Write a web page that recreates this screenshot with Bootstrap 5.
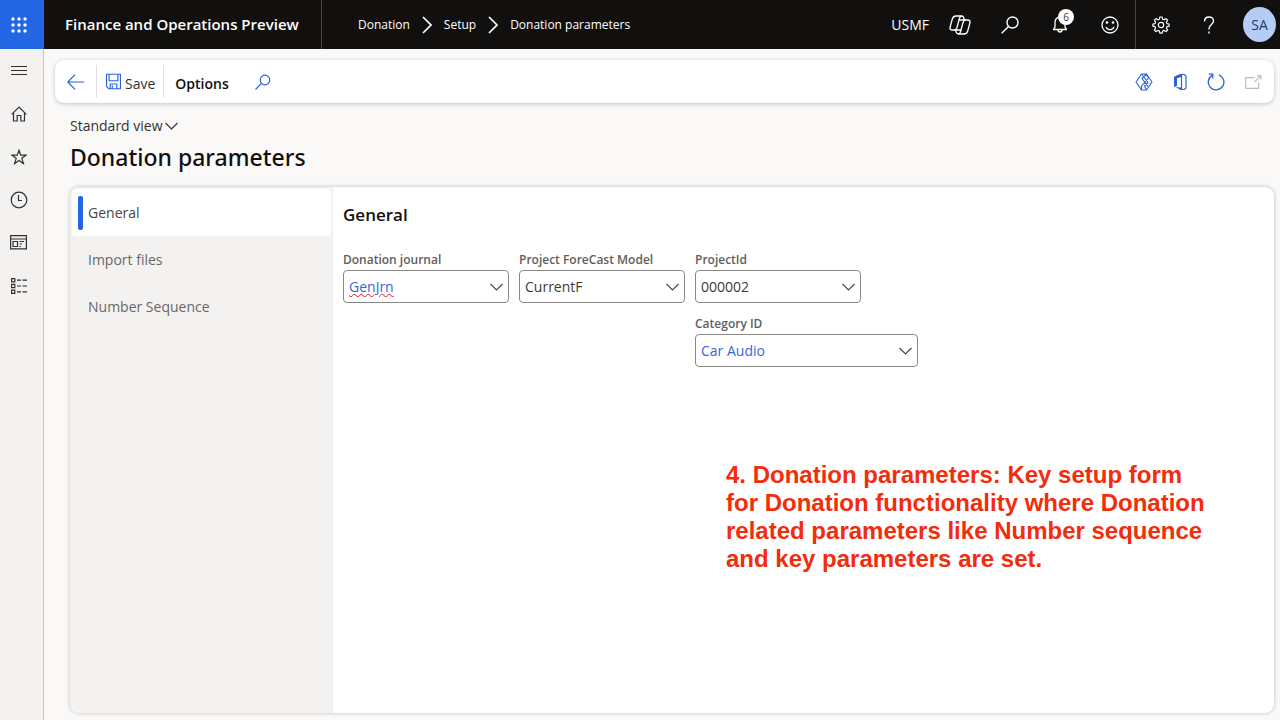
<!DOCTYPE html>
<html lang="en">
<head>
<meta charset="utf-8">
<meta name="viewport" content="width=device-width, initial-scale=1">
<title>Donation parameters</title>
<link href="https://cdn.jsdelivr.net/npm/bootstrap@5.3.0/dist/css/bootstrap.min.css" rel="stylesheet">
<style>
  body { font-family: "Open Sans", "Noto Sans", sans-serif; font-size: 14px; line-height: 20px; background: #faf9f8; color: #323130; }
  svg { display: block; flex: none; fill: none; stroke: currentColor; }
  a { color: inherit; text-decoration: none; }
  button { color: inherit; background: none; border: 0; padding: 0; }
  .topbar { background: #11100f; color: #fff; height: 49px; }
  .waffle { width: 44px; padding-right: 6px; background: #2266e3; }
  .dots { fill: currentColor; stroke: none; }
  .brand { width: 278px; padding: 0 0 2px 21px; font-size: 15px; font-weight: 600; border-right: 1px solid #4a4948; }
  .crumbs { padding-left: 36px; gap: 12px; font-size: 12px; }
  .company { margin-right: 20px; }
  .copilot { margin-right: 14px; }
  .top-icon { width: 50px; }
  .split { border-left: 1px solid #4a4948; }
  .count { top: 9px; right: 11px; width: 16px; height: 16px; border-radius: 50%; background: #fff; color: #323130; font-size: 10px; line-height: 16px; }
  .avatar { width: 33px; height: 35px; border-radius: 50%; background: #b5cdf6; color: #243a5e; margin: 0 4px 0 10px; }
  .rail { width: 44px; background: #f3f2f1; border-right: 1px solid #c8c6c4; }
  .rail-btn { height: 43px; padding-right: 6px; }
  .toolbar-card { min-height: 43px; margin: 11px 6px 0 11px; border-radius: 9px; background: #fff; box-shadow: 0 1px 4px rgba(0,0,0,.22); }
  .accent { color: #2b62d9; }
  .tool-sep { border-left: 1px solid #e1dfdd; height: 33px; }
  .save { margin: 0 8px 0 9px; gap: 4px; }
  .options { margin-left: 11px; }
  .find { margin-left: 26px; }
  .strong { font-weight: 600; color: #11100f; }
  .head { padding: 13px 26px 0; }
  .view { gap: 2px; }
  .page-title { font-family: "Noto Sans", sans-serif; font-size: 23px; line-height: 34px; font-weight: 500; color: #11100f; margin-top: 4px; }
  .panel { margin: 13px 6px 7px 26px; border-radius: 9px; background: #fff; box-shadow: 0 0 4px rgba(0,0,0,.24); overflow: hidden; }
  .tabs-side { width: 263px; background: #f3f2f1; padding: 2px; }
  .side-tab { height: 47px; padding-left: 6px; gap: 5px; border-radius: 4px; text-align: left; color: #696765; }
  .side-tab::before { content: ""; width: 5px; height: 34px; border-radius: 2px; }
  .side-tab.active { background: #fff; color: #484644; }
  .side-tab.active::before { background: #2266e3; }
  .detail { padding: 17px 10px; }
  .section-title { font-size: 17px; line-height: 22px; font-weight: 600; color: #11100f; margin-bottom: 25px; }
  .fields { gap: 10px; }
  .field-col { gap: 12px; }
  .field { width: 166px; }
  .field-wide { width: 223px; }
  .field-label { display: block; font-size: 12px; line-height: 18px; font-weight: 600; color: #605e5c; margin-bottom: 1px; }
  .combo { height: 33px; border: 1px solid #8a8886; border-radius: 4px; font-size: 14px; line-height: 20px; padding: 6px 30px 5px 5px; color: #3b3a39; background-color: #fff;
    background-image: url("data:image/svg+xml,%3Csvg xmlns='http://www.w3.org/2000/svg' viewBox='0 0 13 8'%3E%3Cpath d='M.5 1l6 6 6-6' fill='none' stroke='%23484644' stroke-width='1.1'/%3E%3C/svg%3E");
    background-size: 13px 8px; background-position: right 5px center; }
  .combo.linked { color: #3866d6; }
  .combo.misspelt { text-decoration: underline wavy #e81123 1px; }
  .note { font: bold 24px/28px "Liberation Sans", sans-serif; color: #f32c0c; width: 490px; margin: 94px 48px 0 auto; }
</style>
</head>
<body class="d-flex flex-column min-vh-100">
<header class="topbar d-flex align-items-stretch">
  <button class="waffle d-flex align-items-center justify-content-center" aria-label="App launcher">
    <svg class="dots" width="16" height="16" viewBox="0 0 16 16"><circle cx="2" cy="2" r="1.7"/><circle cx="8" cy="2" r="1.7"/><circle cx="14" cy="2" r="1.7"/><circle cx="2" cy="8" r="1.7"/><circle cx="8" cy="8" r="1.7"/><circle cx="14" cy="8" r="1.7"/><circle cx="2" cy="14" r="1.7"/><circle cx="8" cy="14" r="1.7"/><circle cx="14" cy="14" r="1.7"/></svg>
  </button>
  <a href="#" class="brand d-flex align-items-center text-nowrap">Finance and Operations Preview</a>
  <nav class="crumbs d-flex align-items-center text-nowrap" aria-label="Breadcrumb">
    <a href="#">Donation</a>
    <svg width="10" height="18" viewBox="0 0 10 18" stroke-width="1.7"><path d="M1 1l8 8-8 8"/></svg>
    <a href="#">Setup</a>
    <svg width="10" height="18" viewBox="0 0 10 18" stroke-width="1.7"><path d="M1 1l8 8-8 8"/></svg>
    <a href="#">Donation parameters</a>
  </nav>
  <div class="d-flex align-items-stretch ms-auto">
    <button class="company">USMF</button>
    <button class="copilot d-flex align-items-center justify-content-center" aria-label="Copilot">
      <svg width="22" height="20" viewBox="0 0 22 20" stroke-width="1.300" stroke-linejoin="round"><path d="M7 1H12.500Q11 1.300 10.400 3.500L8 12.500Q7.200 15 5.500 15H3.500Q.3 15 1.100 12L3.300 4Q4.200 1 7 1Z"/><path d="M15 19H9.500Q11 18.700 11.600 16.500L14 7.500Q14.800 5 16.500 5H18.500Q21.700 5 20.900 8L18.700 16Q17.800 19 15 19Z"/><path d="M12.500 1Q14.300 1 14.900 3L15.500 5.200M9.500 19Q7.700 19 7.100 17L6.500 14.800M9.800 5H16.500M5.500 15H12.200"/></svg>
    </button>
    <button class="top-icon d-flex align-items-center justify-content-center" aria-label="Search">
      <svg width="18" height="18" viewBox="0 0 18 18" stroke-width="1.4"><circle cx="11.500" cy="6.500" r="5.500"/><path d="M7.500 10.500L.7 17.300"/></svg>
    </button>
    <button class="top-icon position-relative d-flex align-items-center justify-content-center" aria-label="Notifications">
      <svg width="14" height="17" viewBox="0 0 14 17" stroke-width="1.3"><path d="M.5 13.500H13.500L12 11V6A5 5 0 0 0 2 6V11Z"/><path d="M5 14a2 2 0 0 0 4 0"/></svg>
      <span class="count position-absolute text-center">6</span>
    </button>
    <button class="top-icon d-flex align-items-center justify-content-center" aria-label="Feedback">
      <svg width="18" height="18" viewBox="0 0 18 18" stroke-width="1.3"><circle cx="9" cy="9" r="8"/><path d="M5 11a4.300 4.300 0 0 0 8 0"/><circle cx="6" cy="6.500" r=".7" fill="#fff"/><circle cx="12" cy="6.500" r=".7" fill="#fff"/></svg>
    </button>
    <button class="top-icon split d-flex align-items-center justify-content-center" aria-label="Settings">
      <svg width="18" height="18" viewBox="0 0 18 18" stroke-width="1.200" stroke-linejoin="round"><path d="M7.800 1h2.400l.4 2.200 1.500.6 1.900-1.200 1.600 1.600-1.200 1.900.6 1.500 2.100.4v2.200l-2.100.4-.6 1.500 1.200 1.900-1.600 1.600-1.900-1.200-1.500.6-.4 2.100H7.800l-.4-2.100-1.500-.6L4 15.600 2.400 14l1.200-1.900L3 10.600.9 10.200V8L3 7.600l.6-1.500L2.400 4.200 4 2.600l1.900 1.200 1.500-.6z"/><circle cx="9" cy="9" r="2.700"/></svg>
    </button>
    <button class="d-flex align-items-center justify-content-center px-3" aria-label="Help">
      <svg width="16" height="18" viewBox="0 0 16 18" stroke-width="1.400"><path d="M3.500 5.500C3.500 2.700 5.300 1 8 1s4.500 1.600 4.500 4c0 3.500-4.500 4-4.500 7.500v1"/><path d="M8 15.500v2"/></svg>
    </button>
    <button class="avatar align-self-center" aria-label="Account">SA</button>
  </div>
</header>

<div class="d-flex flex-grow-1">
  <nav class="rail flex-shrink-0 d-flex flex-column" aria-label="Main">
    <button class="rail-btn d-flex align-items-center justify-content-center" aria-label="Expand navigation"><svg width="16" height="9" viewBox="0 0 16 9"><path d="M0 .5h16M0 4.500h16M0 8.500h16"/></svg></button>
    <button class="rail-btn d-flex align-items-center justify-content-center" aria-label="Home"><svg width="16" height="16" viewBox="0 0 16 16" stroke-width="1.200"><path d="M.7 8.300L8 1l7.300 7.300M2.500 6.800V15h3.700V9.500h3.600V15h3.700V6.800"/></svg></button>
    <button class="rail-btn d-flex align-items-center justify-content-center" aria-label="Favorites"><svg width="16" height="16" viewBox="0 0 16 16" stroke-width="1.200"><path d="M8 1.200L9.700 6.200H15L10.800 9.300 12.400 14.600 8 11.400 3.600 14.600 5.200 9.300 1 6.200H6.300Z"/></svg></button>
    <button class="rail-btn d-flex align-items-center justify-content-center" aria-label="Recent"><svg width="18" height="18" viewBox="0 0 18 18" stroke-width="1.200"><circle cx="9" cy="9" r="7.800"/><path d="M8.500 4v5.500H12"/></svg></button>
    <button class="rail-btn d-flex align-items-center justify-content-center" aria-label="Workspaces"><svg width="17" height="15" viewBox="0 0 17 15" stroke-width="1.200"><path d="M.6.6h15.800v13.300H.6zM.6 4h15.800M3 6.500h4.500v5H3zM9.500 6.500H14M9.500 9H12M9.500 11.500H11"/></svg></button>
    <button class="rail-btn d-flex align-items-center justify-content-center" aria-label="Modules"><svg width="16" height="16" viewBox="0 0 16 16" stroke-width="1.200"><path d="M.6.6h3.200v3.200H.6zM.6 6.400h3.200v3.200H.6zM.6 12.200h3.200v3.200H.6zM6 2.200h4M11.500 2.200H16M6 8h4M11.500 8H16M6 13.800h4M11.500 13.800H16"/></svg></button>
  </nav>

  <main class="flex-grow-1 d-flex flex-column">
    <div class="toolbar-card d-flex align-items-center" role="toolbar">
      <button class="accent px-2 ms-1" aria-label="Back"><svg width="17" height="16" viewBox="0 0 17 16" stroke-width="1.200"><path d="M8 .7L.9 8 8 15.300M1 8h16"/></svg></button>
      <span class="tool-sep ms-1"></span>
      <button class="save d-flex align-items-center"><svg class="accent" width="15" height="17" viewBox="0 0 16 17" stroke-width="1.200"><path d="M.6.7h14.800v15.500H3L.6 13.800zM3.300 .7v7h9.400v-7M4.500 16v-4.800h7V16M6.700 12.500V16"/></svg><span class="pt-1">Save</span></button>
      <span class="tool-sep"></span>
      <button class="options strong pt-1">Options</button>
      <button class="find accent" aria-label="Search actions"><svg width="16" height="16" viewBox="0 0 16 16" stroke-width="1.200"><circle cx="10" cy="6" r="4.800"/><path d="M6.600 9.400L.5 15.500"/></svg></button>
      <div class="d-flex align-items-center gap-3 ms-auto accent me-2 pe-1">
        <button class="me-1" aria-label="Power Apps"><svg width="18" height="18" viewBox="0 0 18 18" stroke-width="1.100" stroke-linejoin="round"><path d="M6.500 1h5L17 9l-5.500 8h-5L1 9zM6.500 1L13 9.500 9.500 13 11.500 17M11.500 1L7 5.500 13 13.500M6.500 17L6.500 13 13.500 5M11.500 1L13.500 5"/></svg></button>
        <button class="me-1" aria-label="Open in Microsoft Office"><svg width="14" height="18" viewBox="0 0 14 18" stroke-width="1.200"><path d="M8.500 .5L3 2.800 1 4v10l3-1V5.200L8 4v10.500L2.500 14l6 3.500z" fill="currentColor" stroke="none"/><path d="M8.500 1.500h3L13 3v12l-1.500 1.500h-3z"/></svg></button>
        <button class="me-1" aria-label="Refresh"><svg width="18" height="18" viewBox="0 0 18 18" stroke-width="1.300"><path d="M12 1.800A7.800 7.800 0 1 1 5 2.400M1.800 1.200h4v4.300"/></svg></button>
        <button class="text-black-50 opacity-50" aria-label="Open in new window" disabled><svg width="17" height="14" viewBox="0 0 17 14" stroke-width="1.200"><path d="M9.500 2.600H.6v10.800h13V7.500M9.500 7L15.500 1M12 .7h4v4"/></svg></button>
      </div>
    </div>

    <div class="head">
      <button class="view d-flex align-items-center">Standard view <svg width="13" height="8" viewBox="0 0 13 8" stroke-width="1.100"><path d="M.5 1l6 6 6-6"/></svg></button>
      <h1 class="page-title mb-0">Donation parameters</h1>
    </div>

    <div class="panel flex-grow-1 d-flex">
      <div class="tabs-side flex-shrink-0 d-flex flex-column" role="tablist" aria-orientation="vertical">
        <button class="side-tab active d-flex align-items-center" role="tab" aria-selected="true">General</button>
        <button class="side-tab d-flex align-items-center" role="tab" aria-selected="false">Import files</button>
        <button class="side-tab d-flex align-items-center" role="tab" aria-selected="false">Number Sequence</button>
      </div>
      <section class="detail flex-grow-1" role="tabpanel">
        <h2 class="section-title">General</h2>
        <form class="fields d-flex flex-wrap align-items-start">
          <div class="field"><label class="field-label" for="journal">Donation journal</label><select id="journal" class="form-select combo linked misspelt"><option>GenJrn</option></select></div>
          <div class="field"><label class="field-label" for="model">Project ForeCast Model</label><select id="model" class="form-select combo"><option>CurrentF</option></select></div>
          <div class="field-col d-flex flex-column">
            <div class="field"><label class="field-label" for="project">ProjectId</label><select id="project" class="form-select combo"><option>000002</option></select></div>
            <div class="field-wide"><label class="field-label" for="category">Category ID</label><select id="category" class="form-select combo linked"><option>Car Audio</option></select></div>
          </div>
        </form>
        <p class="note">4. Donation parameters: Key setup form for Donation functionality where Donation related parameters like Number sequence and key parameters are set.</p>
      </section>
    </div>
  </main>
</div>
<script src="https://cdn.jsdelivr.net/npm/bootstrap@5.3.0/dist/js/bootstrap.bundle.min.js"></script>
</body>
</html>
